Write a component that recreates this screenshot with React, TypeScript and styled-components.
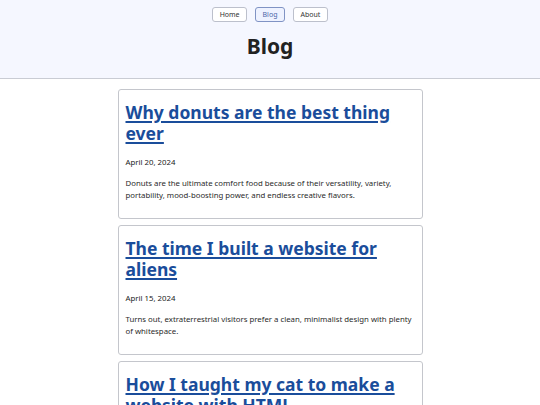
import React from 'react'
import styled, { createGlobalStyle } from 'styled-components'

const GlobalStyle = createGlobalStyle`
  html, body {
    margin: 0;
    padding: 0;
    background: #ffffff;
    font-family: "Noto Sans", "Open Sans", sans-serif;
    color: #222;
  }
`

const Header = styled.header`
  background: #f5f7ff;
  border-bottom: 1px solid #c9ccd4;
  padding: 7px 0 0;
  height: 71px;
  display: flex;
  flex-direction: column;
  align-items: center;
`

const Nav = styled.nav`
  display: flex;
  gap: 8px;
`

const NavButton = styled.a<{ $active?: boolean }>`
  display: inline-flex;
  align-items: center;
  justify-content: center;
  height: 15px;
  padding: 0 6.5px;
  box-sizing: border-box;
  border: 1px solid ${(p) => (p.$active ? '#8093c4' : '#bcc0cc')};
  border-radius: 3px;
  background: ${(p) => (p.$active ? '#eef2ff' : '#ffffff')};
  color: ${(p) => (p.$active ? '#4a66a8' : '#333')};
  font-size: 7px;
  text-decoration: none;
`

const Title = styled.h1`
  margin: 10px 0 0;
  font-size: 21px;
  line-height: 28px;
  font-weight: 700;
  color: #222;
`

const Main = styled.main`
  display: flex;
  flex-direction: column;
  align-items: center;
  gap: 6px;
  padding-top: 10px;
`

const Card = styled.article`
  width: 305px;
  box-sizing: border-box;
  border: 1px solid #c4c6cc;
  border-radius: 3px;
  padding: 11.5px 7px 17px;
`

const PostTitle = styled.a`
  display: block;
  font-size: 17.5px;
  line-height: 21px;
  font-weight: 700;
  color: #1a4d9b;
  text-decoration: underline;
  text-decoration-thickness: 1.5px;
  text-underline-offset: 2px;
`

const PostDate = styled.p`
  margin: 12.5px 0 0;
  font-size: 7.8px;
  line-height: 12px;
  color: #222;
`

const PostBody = styled.p`
  margin: 9px 0 0;
  font-size: 7.8px;
  line-height: 12px;
  color: #2a2a2a;
`

const posts = [
  {
    title: 'Why donuts are the best thing ever',
    date: 'April 20, 2024',
    body: 'Donuts are the ultimate comfort food because of their versatility, variety, portability, mood-boosting power, and endless creative flavors.',
  },
  {
    title: 'The time I built a website for aliens',
    date: 'April 15, 2024',
    body: 'Turns out, extraterrestrial visitors prefer a clean, minimalist design with plenty of whitespace.',
  },
  {
    title: 'How I taught my cat to make a website with HTML',
    date: 'April 10, 2024',
    body: 'It took patience, treats, and a very small keyboard, but the results speak for themselves.',
  },
]

export default function App() {
  return (
    <>
      <GlobalStyle />
      <Header>
        <Nav>
          <NavButton href="#">Home</NavButton>
          <NavButton href="#" $active>
            Blog
          </NavButton>
          <NavButton href="#">About</NavButton>
        </Nav>
        <Title>Blog</Title>
      </Header>
      <Main>
        {posts.map((post) => (
          <Card key={post.title}>
            <PostTitle href="#">{post.title}</PostTitle>
            <PostDate>{post.date}</PostDate>
            <PostBody>{post.body}</PostBody>
          </Card>
        ))}
      </Main>
    </>
  )
}
